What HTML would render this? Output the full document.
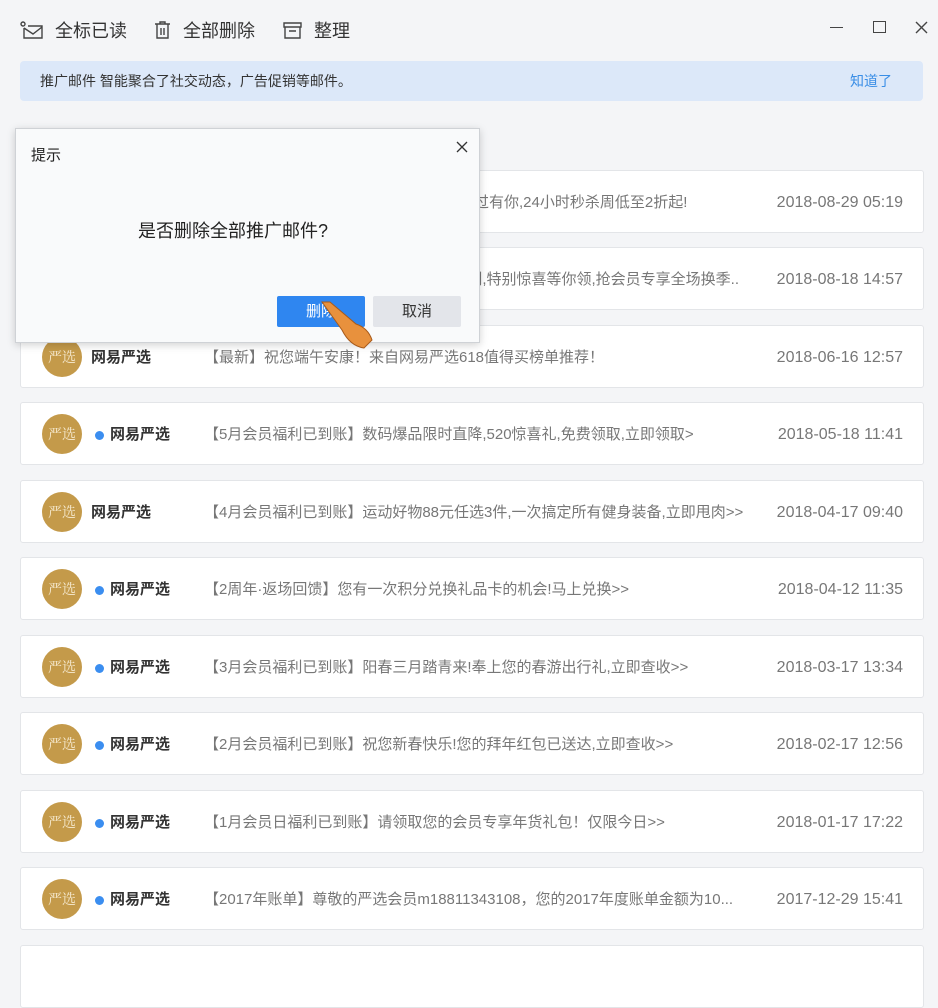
<!DOCTYPE html>
<html><head><meta charset="utf-8">
<style>
*{margin:0;padding:0;box-sizing:border-box}
body{width:938px;height:953px;overflow:hidden;background:#f4f5f7;font-family:"Liberation Sans","Noto Sans CJK SC",sans-serif;position:relative;color:#333}
.tb{position:absolute;top:17px;font-size:18px;color:#333;display:flex;align-items:center}
.tb svg{margin-right:12px}
.banner{position:absolute;left:20px;top:61px;width:903px;height:40px;background:#dce8f9;border-radius:4px;font-size:14px;color:#333;line-height:40px;padding-left:20px}
.banner span{position:absolute;right:31px;color:#3a8ee6}
.row{position:absolute;left:20px;width:904px;height:63px;background:#fff;border:1px solid #e3e5e8;border-radius:3px}
.av{position:absolute;left:21px;top:11px;width:40px;height:40px;border-radius:50%;background:#c49a4a;color:#f6ead0;font-size:14px;text-align:center;line-height:40px;font-family:"Noto Serif CJK SC",serif}
.dot{position:absolute;left:74px;top:28px;width:9px;height:9px;border-radius:50%;background:#3b8ef0}
.nm{position:absolute;top:0;line-height:63px;font-size:15px;font-weight:bold;color:#333}
.sb{position:absolute;left:183px;top:0;line-height:63px;font-size:15px;color:#777;white-space:nowrap;width:560px;overflow:hidden}
.dt{position:absolute;right:20px;top:0;line-height:63px;font-size:16px;color:#777}
.dlg{position:absolute;left:15px;top:128px;width:465px;height:215px;background:#f9fafb;border:1px solid #cfd2d6;box-shadow:0 2px 8px rgba(0,0,0,.18)}
.btn{position:absolute;top:167px;width:88px;height:31px;border-radius:2px;font-size:15px;text-align:center;line-height:31px}
</style></head><body>
<div class="tb" style="left:20px"><svg width="23" height="18" viewBox="0 0 23 18" fill="none" stroke="#444" stroke-width="1.4"><circle cx="3" cy="3" r="2"/><path d="M4 7v10h18V5H8M4 7l9 6 9-7"/></svg>全标已读</div>
<div class="tb" style="left:154px"><svg width="17" height="18" viewBox="0 0 17 18" fill="none" stroke="#444" stroke-width="1.4"><path d="M1 3h15M6 3V1h5v2M3 3v14h11V3M7 7v7M10 7v7"/></svg>全部删除</div>
<div class="tb" style="left:283px"><svg width="19" height="17" viewBox="0 0 19 17" fill="none" stroke="#444" stroke-width="1.4"><path d="M1 1h17v4H1zM2 5v11h15V5M6 9h7"/></svg>整理</div>
<div style="position:absolute;left:830px;top:27px;width:13px;height:1px;background:#444"></div>
<div style="position:absolute;left:873px;top:21px;width:13px;height:12px;border:1.5px solid #444"></div>
<svg style="position:absolute;left:915px;top:21px" width="13" height="13" stroke="#444" stroke-width="1.4"><path d="M1 1l11 11M12 1L1 12"/></svg>
<div class="banner">推广邮件 智能聚合了社交动态，广告促销等邮件。<span>知道了</span></div>
<div style="position:absolute;left:22px;top:124px;font-size:18px;font-weight:bold;color:#333">推广邮件</div>

<div class="row" style="top:170px"><div class="av">严选</div><div class="nm" style="left:70px">网易严选</div><div class="sb">【会员日】严选会员日来袭，好物不会错过有你,24小时秒杀周低至2折起!</div><div class="dt">2018-08-29 05:19</div></div>
<div class="row" style="top:247px"><div class="av">严选</div><div class="nm" style="left:70px">网易严选</div><div class="sb">【8月会员福利已到账】限时会员专属福利,特别惊喜等你领,抢会员专享全场换季..</div><div class="dt">2018-08-18 14:57</div></div>
<div class="row" style="top:325px"><div class="av">严选</div><div class="nm" style="left:70px">网易严选</div><div class="sb">【最新】祝您端午安康！来自网易严选618值得买榜单推荐！</div><div class="dt">2018-06-16 12:57</div></div>
<div class="row" style="top:402px"><div class="av">严选</div><div class="dot"></div><div class="nm" style="left:89px">网易严选</div><div class="sb">【5月会员福利已到账】数码爆品限时直降,520惊喜礼,免费领取,立即领取&gt;</div><div class="dt">2018-05-18 11:41</div></div>
<div class="row" style="top:480px"><div class="av">严选</div><div class="nm" style="left:70px">网易严选</div><div class="sb">【4月会员福利已到账】运动好物88元任选3件,一次搞定所有健身装备,立即甩肉&gt;&gt;</div><div class="dt">2018-04-17 09:40</div></div>
<div class="row" style="top:557px"><div class="av">严选</div><div class="dot"></div><div class="nm" style="left:89px">网易严选</div><div class="sb">【2周年·返场回馈】您有一次积分兑换礼品卡的机会!马上兑换&gt;&gt;</div><div class="dt">2018-04-12 11:35</div></div>
<div class="row" style="top:635px"><div class="av">严选</div><div class="dot"></div><div class="nm" style="left:89px">网易严选</div><div class="sb">【3月会员福利已到账】阳春三月踏青来!奉上您的春游出行礼,立即查收&gt;&gt;</div><div class="dt">2018-03-17 13:34</div></div>
<div class="row" style="top:712px"><div class="av">严选</div><div class="dot"></div><div class="nm" style="left:89px">网易严选</div><div class="sb">【2月会员福利已到账】祝您新春快乐!您的拜年红包已送达,立即查收&gt;&gt;</div><div class="dt">2018-02-17 12:56</div></div>
<div class="row" style="top:790px"><div class="av">严选</div><div class="dot"></div><div class="nm" style="left:89px">网易严选</div><div class="sb">【1月会员日福利已到账】请领取您的会员专享年货礼包！仅限今日&gt;&gt;</div><div class="dt">2018-01-17 17:22</div></div>
<div class="row" style="top:867px"><div class="av">严选</div><div class="dot"></div><div class="nm" style="left:89px">网易严选</div><div class="sb" style="width:545px">【2017年账单】尊敬的严选会员m18811343108，您的2017年度账单金额为10...</div><div class="dt">2017-12-29 15:41</div></div>
<div class="row" style="top:945px"></div>

<div class="dlg">
<div style="position:absolute;left:15px;top:15px;font-size:15px;color:#222">提示</div>
<svg style="position:absolute;left:440px;top:12px" width="12" height="12" stroke="#333" stroke-width="1.3"><path d="M1 1l10 10M11 1L1 11"/></svg>
<div style="position:absolute;left:122px;top:88px;font-size:18px;color:#222">是否删除全部推广邮件?</div>
<div class="btn" style="left:261px;background:#2f86f0;color:#fff">删除</div>
<div class="btn" style="left:357px;background:#e3e5ea;color:#333">取消</div>
</div>
<svg style="position:absolute;left:320px;top:300px" width="60" height="55"><path d="M2 2 L22 30 Q30 46 44 48 L52 40 Q48 28 36 24 L10 2 Z" fill="#e8913d" stroke="#a85a1a" stroke-width="1"/></svg>
</body></html>
